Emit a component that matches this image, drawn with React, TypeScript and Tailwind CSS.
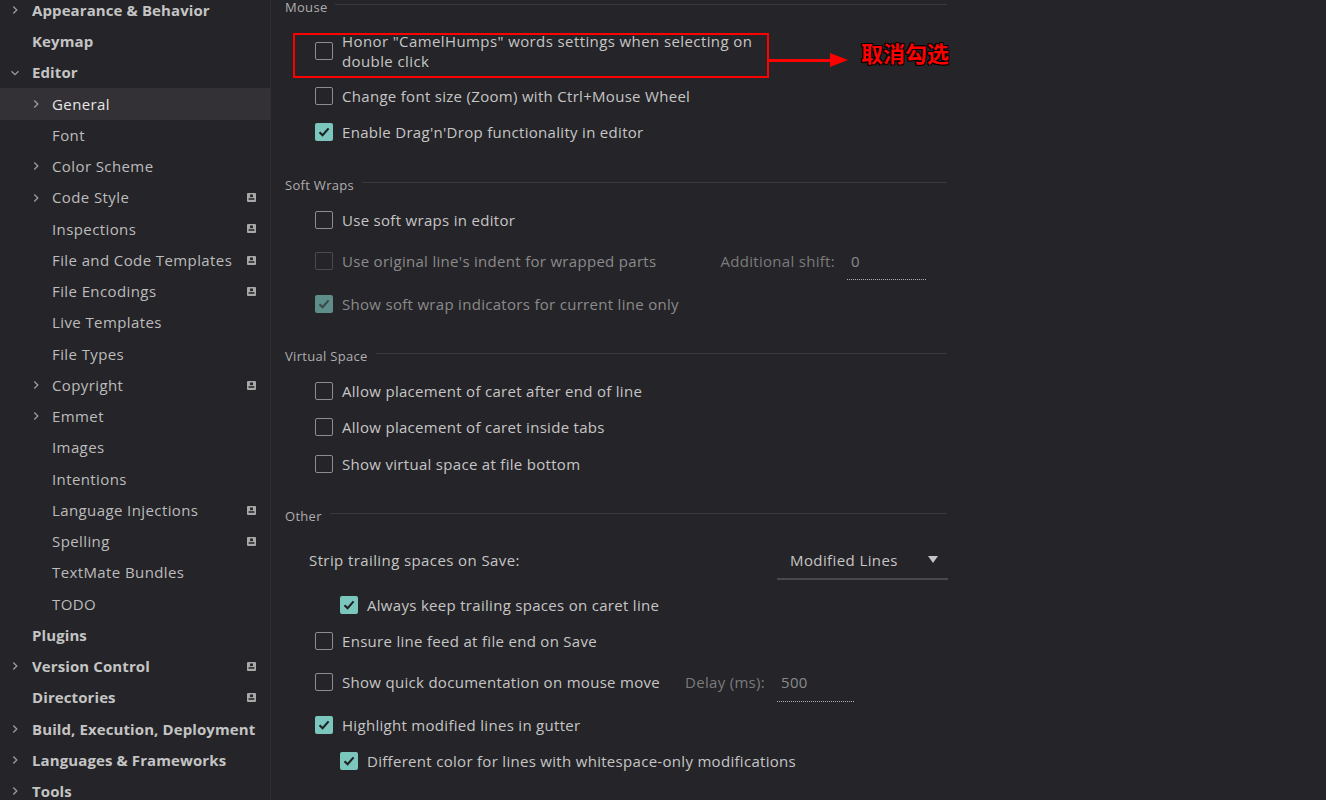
import React from "react";

const FONT = { fontFamily: '"Open Sans", "Noto Sans", "Noto Sans CJK SC", sans-serif' };

function Chevron({ down }: { down?: boolean }) {
  return (
    <svg width="10" height="10" viewBox="0 0 10 10" className="shrink-0">
      {down ? (
        <path d="M1.5 3.2 L5 6.7 L8.5 3.2" fill="none" stroke="#9c9c9c" strokeWidth="1.3" />
      ) : (
        <path d="M3.3 1.5 L6.8 5 L3.3 8.5" fill="none" stroke="#9c9c9c" strokeWidth="1.3" />
      )}
    </svg>
  );
}

function Lock() {
  return (
    <svg width="9" height="9" viewBox="0 0 9 9" className="shrink-0">
      <rect x="0" y="0" width="9" height="9" rx="1" fill="#a8a8a8" />
      <rect x="3" y="1.5" width="3" height="2.6" fill="#2a282c" />
      <rect x="1.6" y="5.2" width="5.8" height="1.6" fill="#2a282c" />
    </svg>
  );
}

type Item = { label: string; level: 0 | 1; chevron?: "r" | "d"; lock?: boolean; selected?: boolean };

const items: Item[] = [
  { label: "Appearance & Behavior", level: 0, chevron: "r" },
  { label: "Keymap", level: 0 },
  { label: "Editor", level: 0, chevron: "d" },
  { label: "General", level: 1, chevron: "r", selected: true },
  { label: "Font", level: 1 },
  { label: "Color Scheme", level: 1, chevron: "r" },
  { label: "Code Style", level: 1, chevron: "r", lock: true },
  { label: "Inspections", level: 1, lock: true },
  { label: "File and Code Templates", level: 1, lock: true },
  { label: "File Encodings", level: 1, lock: true },
  { label: "Live Templates", level: 1 },
  { label: "File Types", level: 1 },
  { label: "Copyright", level: 1, chevron: "r", lock: true },
  { label: "Emmet", level: 1, chevron: "r" },
  { label: "Images", level: 1 },
  { label: "Intentions", level: 1 },
  { label: "Language Injections", level: 1, lock: true },
  { label: "Spelling", level: 1, lock: true },
  { label: "TextMate Bundles", level: 1 },
  { label: "TODO", level: 1 },
  { label: "Plugins", level: 0 },
  { label: "Version Control", level: 0, chevron: "r", lock: true },
  { label: "Directories", level: 0, lock: true },
  { label: "Build, Execution, Deployment", level: 0, chevron: "r" },
  { label: "Languages & Frameworks", level: 0, chevron: "r" },
  { label: "Tools", level: 0, chevron: "r" },
];

function Sidebar() {
  return (
    <div className="w-[271px] shrink-0 border-r border-[#302e33] h-full overflow-hidden">
      <div className="mt-[-5.5px] flex flex-col">
        {items.map((it) => (
          <div
            key={it.label}
            className={`h-[31.25px] flex items-center shrink-0 ${it.selected ? "bg-[#333136]" : ""}`}
          >
            <div className={`${it.level === 0 ? "w-[32px] pl-[10px]" : "w-[52px] pl-[31px]"} shrink-0 flex items-center`}>
              {it.chevron && <Chevron down={it.chevron === "d"} />}
            </div>
            <span
              className={`flex-1 text-[15px] whitespace-nowrap ${
                it.level === 0
                  ? "font-bold text-[#c4c4c4] tracking-[0.1px]"
                  : it.selected
                  ? "text-[#e6e6e6] tracking-[0.4px]"
                  : "text-[#bcbcbc] tracking-[0.4px]"
              }`}
            >
              {it.label}
            </span>
            <div className="w-[23px] shrink-0 flex items-center">{it.lock && <Lock />}</div>
          </div>
        ))}
      </div>
    </div>
  );
}

function Checkbox({ checked, disabled }: { checked?: boolean; disabled?: boolean }) {
  if (checked) {
    return (
      <div
        className={`w-[18px] h-[18px] rounded-[2px] shrink-0 flex items-center justify-center ${
          disabled ? "bg-[#5e8e89]" : "bg-[#7cc7bd]"
        }`}
      >
        <svg width="14" height="14" viewBox="0 0 14 14">
          <path
            d="M2.5 7.2 L5.6 10.3 L11.6 3.4"
            fill="none"
            stroke={disabled ? "#3a4a49" : "#1f2124"}
            strokeWidth="2.1"
          />
        </svg>
      </div>
    );
  }
  return (
    <div
      className={`w-[18px] h-[18px] rounded-[2px] shrink-0 border ${
        disabled ? "border-[#4c4a50]" : "border-[#8d8d8f]"
      }`}
    />
  );
}

function Header({ title }: { title: string }) {
  return (
    <div className="h-[16px] flex items-center gap-[8px] pl-px">
      <span className="text-[13px] text-[#aeaeae] leading-none tracking-[0.3px]">{title}</span>
      <div className="flex-1 h-px bg-[#3a383d] mb-[6px]" />
    </div>
  );
}

function Row({
  label,
  checked,
  disabled,
  indent,
  h = 36,
  children,
}: {
  label: string;
  checked?: boolean;
  disabled?: boolean;
  indent?: boolean;
  h?: number;
  children?: React.ReactNode;
}) {
  return (
    <div className={`flex items-center ${indent ? "pl-[56px]" : "pl-[31px]"}`} style={{ height: h }}>
      <Checkbox checked={checked} disabled={disabled} />
      <span
        className={`ml-[9px] text-[15px] tracking-[0.3px] whitespace-nowrap ${
          disabled ? "text-[#8b8b8b]" : "text-[#c6c6c6]"
        }`}
      >
        {label}
      </span>
      {children}
    </div>
  );
}

function Content() {
  return (
    <div className="flex-1 h-full overflow-hidden">
      <div className="mt-[-1px] pl-[13px] w-[676px] flex flex-col">
        <Header title="Mouse" />
        <div className="h-[16px]" />
        <div className="relative h-[40px] flex items-start pl-[31px]">
          <div className="mt-[11px]">
            <Checkbox />
          </div>
          <span className="ml-[9px] text-[15px] tracking-[0.4px] leading-[20px] text-[#c6c6c6] w-[418px]">
            Honor "CamelHumps" words settings when selecting on double click
          </span>
          <div className="absolute left-[9px] top-[2px] w-[476px] h-[45px] border-2 border-[#ff0000]" />
          <div className="absolute left-[484px] top-[22px] flex items-center">
            <div className="w-[62px] h-[3px] bg-[#ff0000]" />
            <svg width="18" height="14" viewBox="0 0 18 14">
              <path d="M0 0 L18 7 L0 14 Z" fill="#ff0000" />
            </svg>
          </div>
          <span
            className="absolute left-[577px] top-[10px] text-[22px] leading-none font-bold text-[#ff0000] whitespace-nowrap"
            style={{
              fontFamily: '"Noto Sans CJK SC", sans-serif',
              textShadow: "1px 1px 0 #000, -1px -1px 0 #000, 1px -1px 0 #000, -1px 1px 0 #000",
            }}
          >
            取消勾选
          </span>
        </div>
        <div className="h-[7px]" />
        <Row label="Change font size (Zoom) with Ctrl+Mouse Wheel" />
        <Row label="Enable Drag'n'Drop functionality in editor" checked />
        <div className="h-[27px]" />
        <Header title="Soft Wraps" />
        <div className="h-[9px]" />
        <Row label="Use soft wraps in editor" />
        <Row label="Use original line's indent for wrapped parts" disabled h={46}>
          <span className="ml-[64px] text-[15px] tracking-[0.3px] text-[#7b7b7b] whitespace-nowrap">
            Additional shift:
          </span>
          <div className="ml-[12px] w-[79px] h-[46px] flex flex-col justify-center relative">
            <span className="pl-[4px] text-[15px] text-[#8a8a8a]">0</span>
            <div className="absolute left-0 right-0 bottom-[4px] border-b border-dotted border-[#b0b0b0]" />
          </div>
        </Row>
        <div className="h-[2px]" />
        <Row label="Show soft wrap indicators for current line only" checked disabled />
        <div className="h-[26px]" />
        <Header title="Virtual Space" />
        <div className="h-[9px]" />
        <Row label="Allow placement of caret after end of line" />
        <Row label="Allow placement of caret inside tabs" />
        <div className="h-[1px]" />
        <Row label="Show virtual space at file bottom" />
        <div className="h-[26px]" />
        <Header title="Other" />
        <div className="h-[14px]" />
        <div className="h-[44px] flex items-center pl-[25px]">
          <span className="text-[15px] tracking-[0.4px] text-[#c6c6c6] flex-1">Strip trailing spaces on Save:</span>
          <div className="w-[171px] h-[44px] relative flex items-center pl-[13px] pr-[10px] mr-[-1px]">
            <span className="flex-1 text-[15px] tracking-[0.4px] text-[#c6c6c6]">Modified Lines</span>
            <svg width="10" height="8" viewBox="0 0 10 8">
              <path d="M0 0 L10 0 L5 7 Z" fill="#c4c4c4" />
            </svg>
            <div className="absolute left-0 right-0 bottom-[2px] h-[2px] bg-[#4a484d]" />
          </div>
        </div>
        <div className="h-[5px]" />
        <Row label="Always keep trailing spaces on caret line" checked indent />
        <Row label="Ensure line feed at file end on Save" />
        <div className="h-[5px]" />
        <Row label="Show quick documentation on mouse move">
          <span className="ml-[25px] text-[15px] tracking-[0.3px] text-[#7b7b7b] whitespace-nowrap">Delay (ms):</span>
          <div className="ml-[12px] w-[77px] h-[36px] flex flex-col justify-center relative">
            <span className="pl-[4px] text-[15px] tracking-[0.3px] text-[#8a8a8a]">500</span>
            <div className="absolute left-0 right-0 bottom-[-2px] border-b border-dotted border-[#b0b0b0]" />
          </div>
        </Row>
        <div className="h-[7px]" />
        <Row label="Highlight modified lines in gutter" checked />
        <Row label="Different color for lines with whitespace-only modifications" checked indent />
      </div>
    </div>
  );
}

export default function App() {
  return (
    <div className="w-[1326px] h-[800px] bg-[#252428] flex overflow-hidden" style={FONT}>
      <Sidebar />
      <Content />
    </div>
  );
}
